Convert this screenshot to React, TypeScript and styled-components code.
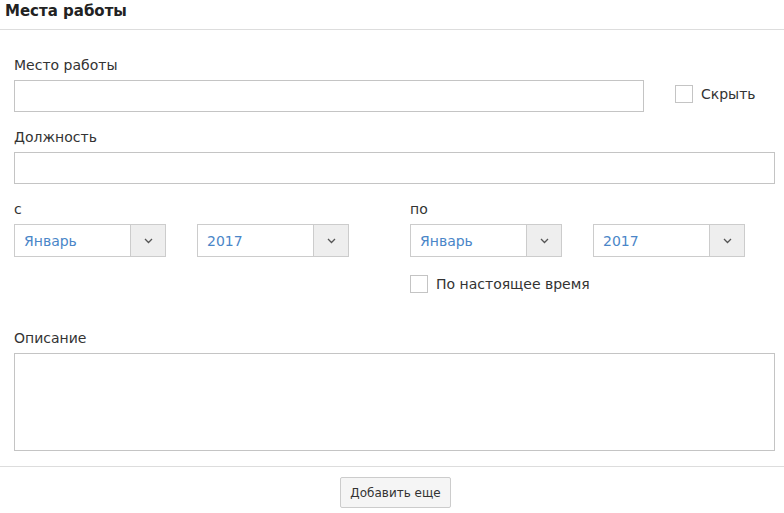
import React from "react";
import styled, { createGlobalStyle } from "styled-components";

const GlobalStyle = createGlobalStyle`
  html, body {
    margin: 0;
    padding: 0;
    background: #ffffff;
    font-family: "DejaVu Sans", Verdana, sans-serif;
    color: #333333;
  }
`;

const months = ["Январь", "Февраль", "Март"];
const years = ["2017", "2016", "2015"];

const App: React.FC = () => {
  return (
    <>
      <GlobalStyle />
      <Page>
        <Header>
          <Title>Места работы</Title>
        </Header>

        <Form>
          <Field>
            <Label>Место работы</Label>
            <InlineRow>
              <TextInput width="630px" />
              <CheckLabel inline>
                <CheckBox />
                <span>Скрыть</span>
              </CheckLabel>
            </InlineRow>
          </Field>

          <Field>
            <Label>Должность</Label>
            <TextInput />
          </Field>

          <DatesRow>
            <DateGroup>
              <Label>с</Label>
              <SelectPair>
                <Select value={months[0]} />
                <Select value={years[0]} />
              </SelectPair>
            </DateGroup>
            <DateGroup>
              <Label>по</Label>
              <SelectPair>
                <Select value={months[0]} />
                <Select value={years[0]} />
              </SelectPair>
              <CheckLabel>
                <CheckBox />
                <span>По настоящее время</span>
              </CheckLabel>
            </DateGroup>
          </DatesRow>

          <Field>
            <Label>Описание</Label>
            <TextArea />
          </Field>
        </Form>

        <Footer>
          <Button>Добавить еще</Button>
        </Footer>
      </Page>
    </>
  );
};

const Select: React.FC<{ value: string }> = ({ value }) => (
  <SelectBox>
    <SelectValue>{value}</SelectValue>
    <SelectArrow>
      <svg width="9" height="6" viewBox="0 0 9 6">
        <path d="M1 1 L4.5 4.5 L8 1" fill="none" stroke="#555" strokeWidth="1.3" />
      </svg>
    </SelectArrow>
  </SelectBox>
);

// Styled Components
const Page = styled.div`
  width: 784px;
`;

const Header = styled.div`
  height: 29px;
  border-bottom: 1px solid #dddddd;
  padding-left: 5px;
  display: flex;
  align-items: center;
`;

const Title = styled.h2`
  margin: 0;
  font-size: 15px;
  font-weight: bold;
  color: #222222;
  margin-top: -7px;
`;

const Form = styled.div`
  padding: 25px 9px 0 14px;
  display: flex;
  flex-direction: column;
`;

const Field = styled.div`
  display: flex;
  flex-direction: column;
  margin-bottom: 15px;
`;

const Label = styled.label`
  font-size: 14px;
  line-height: 20px;
  color: #333333;
  margin-bottom: 5px;
`;

const InlineRow = styled.div`
  display: flex;
  align-items: center;
  gap: 31px;
`;

const TextInput = styled.div<{ width?: string }>`
  box-sizing: border-box;
  width: ${({ width }) => width || "100%"};
  height: 32px;
  border: 1px solid #c4c4c4;
  background: #ffffff;
`;

const TextArea = styled.div`
  box-sizing: border-box;
  width: 100%;
  height: 98px;
  border: 1px solid #c4c4c4;
  background: #ffffff;
`;

const CheckLabel = styled.label<{ inline?: boolean }>`
  display: flex;
  align-items: center;
  gap: 8px;
  font-size: 14px;
  color: #333333;
  margin-top: ${({ inline }) => (inline ? "0" : "18px")};
  margin-bottom: ${({ inline }) => (inline ? "4px" : "0")};
`;

const CheckBox = styled.span`
  box-sizing: border-box;
  display: inline-block;
  width: 18px;
  height: 18px;
  border: 1px solid #c4c4c4;
  background: #ffffff;
`;

const DatesRow = styled.div`
  display: flex;
  margin-bottom: 35px;
`;

const DateGroup = styled.div`
  display: flex;
  flex-direction: column;
  flex-shrink: 0;

  &:first-child {
    width: 396px;
  }
`;

const SelectPair = styled.div`
  display: flex;
  gap: 31px;
`;

const SelectBox = styled.div`
  box-sizing: border-box;
  width: 152px;
  height: 33px;
  border: 1px solid #cccccc;
  display: flex;
  background: #ffffff;
`;

const SelectValue = styled.div`
  flex: 1;
  display: flex;
  align-items: center;
  padding-left: 9px;
  font-size: 14px;
  color: #4a86c8;
`;

const SelectArrow = styled.div`
  width: 34px;
  border-left: 1px solid #cccccc;
  background: #eeeeee;
  display: flex;
  align-items: center;
  justify-content: center;
`;

const Footer = styled.div`
  border-top: 1px solid #dddddd;
  padding-top: 10px;
  display: flex;
  justify-content: center;
`;

const Button = styled.button`
  box-sizing: border-box;
  height: 31px;
  padding: 0 9px;
  border: 1px solid #cccccc;
  border-radius: 2px;
  background: #f5f5f5;
  font-family: "DejaVu Sans", Verdana, sans-serif;
  font-size: 12px;
  color: #333333;
  margin-left: 7px;
`;

export default App;
